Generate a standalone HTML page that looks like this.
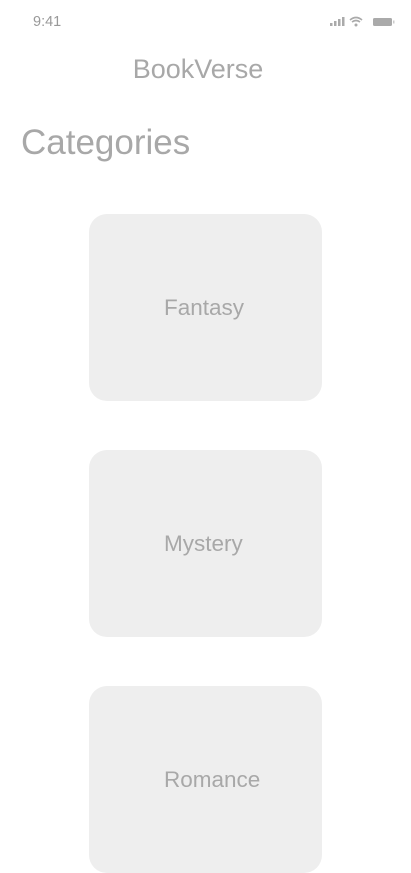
<!DOCTYPE html>
<html><head><style>
html,body{margin:0;padding:0;background:#fff;width:411px;height:823px;overflow:hidden;font-family:"Liberation Sans",sans-serif;color:#a8a8a8}
.t{position:absolute;white-space:nowrap}
.card{position:absolute;left:89px;width:233px;height:187px;background:#eeeeee;border-radius:18px;font-size:22.5px;color:#a8a8a8}
.card span{position:absolute;left:75px;top:81px}
</style></head><body>
<div class="t" style="left:33px;top:14px;font-size:14.5px;color:#999">9:41</div>
<svg style="position:absolute;left:329px;top:15px" width="66" height="14" viewBox="0 0 66 14">
<g fill="#aaa"><rect x="1" y="8" width="2.5" height="3"/><rect x="5" y="6" width="2.5" height="5"/><rect x="9" y="4" width="2.5" height="7"/><rect x="13" y="2" width="2.5" height="9"/></g>
<path d="M21 5 Q27 0 33 5 M23 7 Q27 4 31 7" stroke="#aaa" stroke-width="1.6" fill="none"/><circle cx="27" cy="10" r="1.5" fill="#aaa"/>
<rect x="44" y="3" width="19" height="8" rx="1.5" fill="#aaa"/><rect x="64" y="5.5" width="1.5" height="3" fill="#ccc"/>
</svg>
<div class="t" style="left:0;width:396px;text-align:center;top:54px;font-size:27px">BookVerse</div>
<div class="t" style="left:21px;top:123px;font-size:35px">Categories</div>
<div class="card" style="top:214px"><span>Fantasy</span></div>
<div class="card" style="top:450px"><span>Mystery</span></div>
<div class="card" style="top:686px"><span>Romance</span></div>
</body></html>
